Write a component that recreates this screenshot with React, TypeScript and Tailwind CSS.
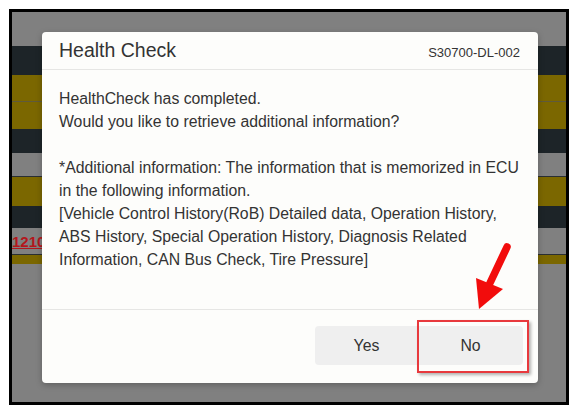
const rows = [
  { h: 'h-[34px]', bg: 'bg-[#808080]' },
  { h: 'h-[29px]', bg: 'bg-[#1d2428]' },
  { h: 'h-[26px]', bg: 'bg-[#7b6700]' },
  { h: 'h-[1px]', bg: 'bg-[#5f5a3c]' },
  { h: 'h-[27px]', bg: 'bg-[#7b6700]' },
  { h: 'h-[24px]', bg: 'bg-[#1d2428]' },
  { h: 'h-[23px]', bg: 'bg-[#808080]' },
  { h: 'h-[1px]', bg: 'bg-[#2a2f33]' },
  { h: 'h-[29px]', bg: 'bg-[#7b6700]' },
  { h: 'h-[22px]', bg: 'bg-[#1d2428]' },
];

const bodyLines = [
  'HealthCheck has completed.',
  'Would you like to retrieve additional information?',
  '',
  '*Additional information: The information that is memorized in ECU',
  'in the following information.',
  '[Vehicle Control History(RoB) Detailed data, Operation History,',
  'ABS History, Special Operation History, Diagnosis Related',
  'Information, CAN Bus Check, Tire Pressure]',
];

export default function App() {
  return (
    <div className="relative w-[578px] h-[416px] bg-white pl-[9px] pt-[9px] font-['Liberation_Sans',Arial,sans-serif]">
      {/* Framed screen */}
      <div className="relative w-[560px] h-[396px] border-[3px] border-black bg-[#808080] overflow-hidden">
        {/* Background table rows, dimmed */}
        <div className="flex flex-col">
          {rows.map((r, i) => (
            <div key={i} className={`${r.h} ${r.bg}`} />
          ))}
          <div className="h-[26px] bg-[#808080] flex items-center">
            <span className="text-[15px] font-bold text-[#b3161c] underline leading-none">12100</span>
          </div>
          <div className="h-[1px] bg-[#2a2f33]" />
          <div className="h-[9px] bg-[#7b6700]" />
        </div>

        {/* Dialog */}
        <div className="absolute left-[30px] top-[20px] w-[496px] h-[351px] bg-[#fdfdfb] rounded-[4px] shadow-[0_2px_6px_rgba(0,0,0,0.25)] flex flex-col text-[#333]">
          <div className="h-[38px] flex items-center justify-between px-[17px] border-b border-[#e6e6e4]">
            <span className="text-[19.5px] leading-none mt-[1px]">Health Check</span>
            <span className="text-[13px] leading-none mt-[4px] mr-[1px]">S30700-DL-002</span>
          </div>

          <div className="h-[240px] px-[17px] pt-[17px] text-[15.8px] leading-[23px] border-b border-[#e6e6e4]">
            {bodyLines.map((line, i) => (
              <div key={i} className="h-[23px] whitespace-nowrap">{line}</div>
            ))}
          </div>

          <div className="flex-1 flex justify-end items-start pt-[16px] pr-[15px]">
            <div className="flex rounded-[4px] bg-[#efefef] text-[15.8px]">
              <button className="w-[103px] h-[39px] flex items-center justify-center">Yes</button>
              <button className="relative w-[105px] h-[39px] flex items-center justify-center">
                No
                <span className="absolute left-[-1px] right-[-6px] top-[-6px] bottom-[-8px] border-2 border-[#e8393d] shadow-[2px_2px_3px_rgba(0,0,0,0.3)]" />
              </button>
            </div>
          </div>
        </div>
      </div>

      {/* Red annotation arrow */}
      <svg className="absolute left-0 top-0 pointer-events-none" width="578" height="416" viewBox="0 0 578 416">
        <line x1="507" y1="247" x2="490" y2="283" stroke="#f20c0c" strokeWidth="7.5" strokeLinecap="round" />
        <polygon points="476,278 503,289 479,309" fill="#f20c0c" />
      </svg>
    </div>
  );
}
